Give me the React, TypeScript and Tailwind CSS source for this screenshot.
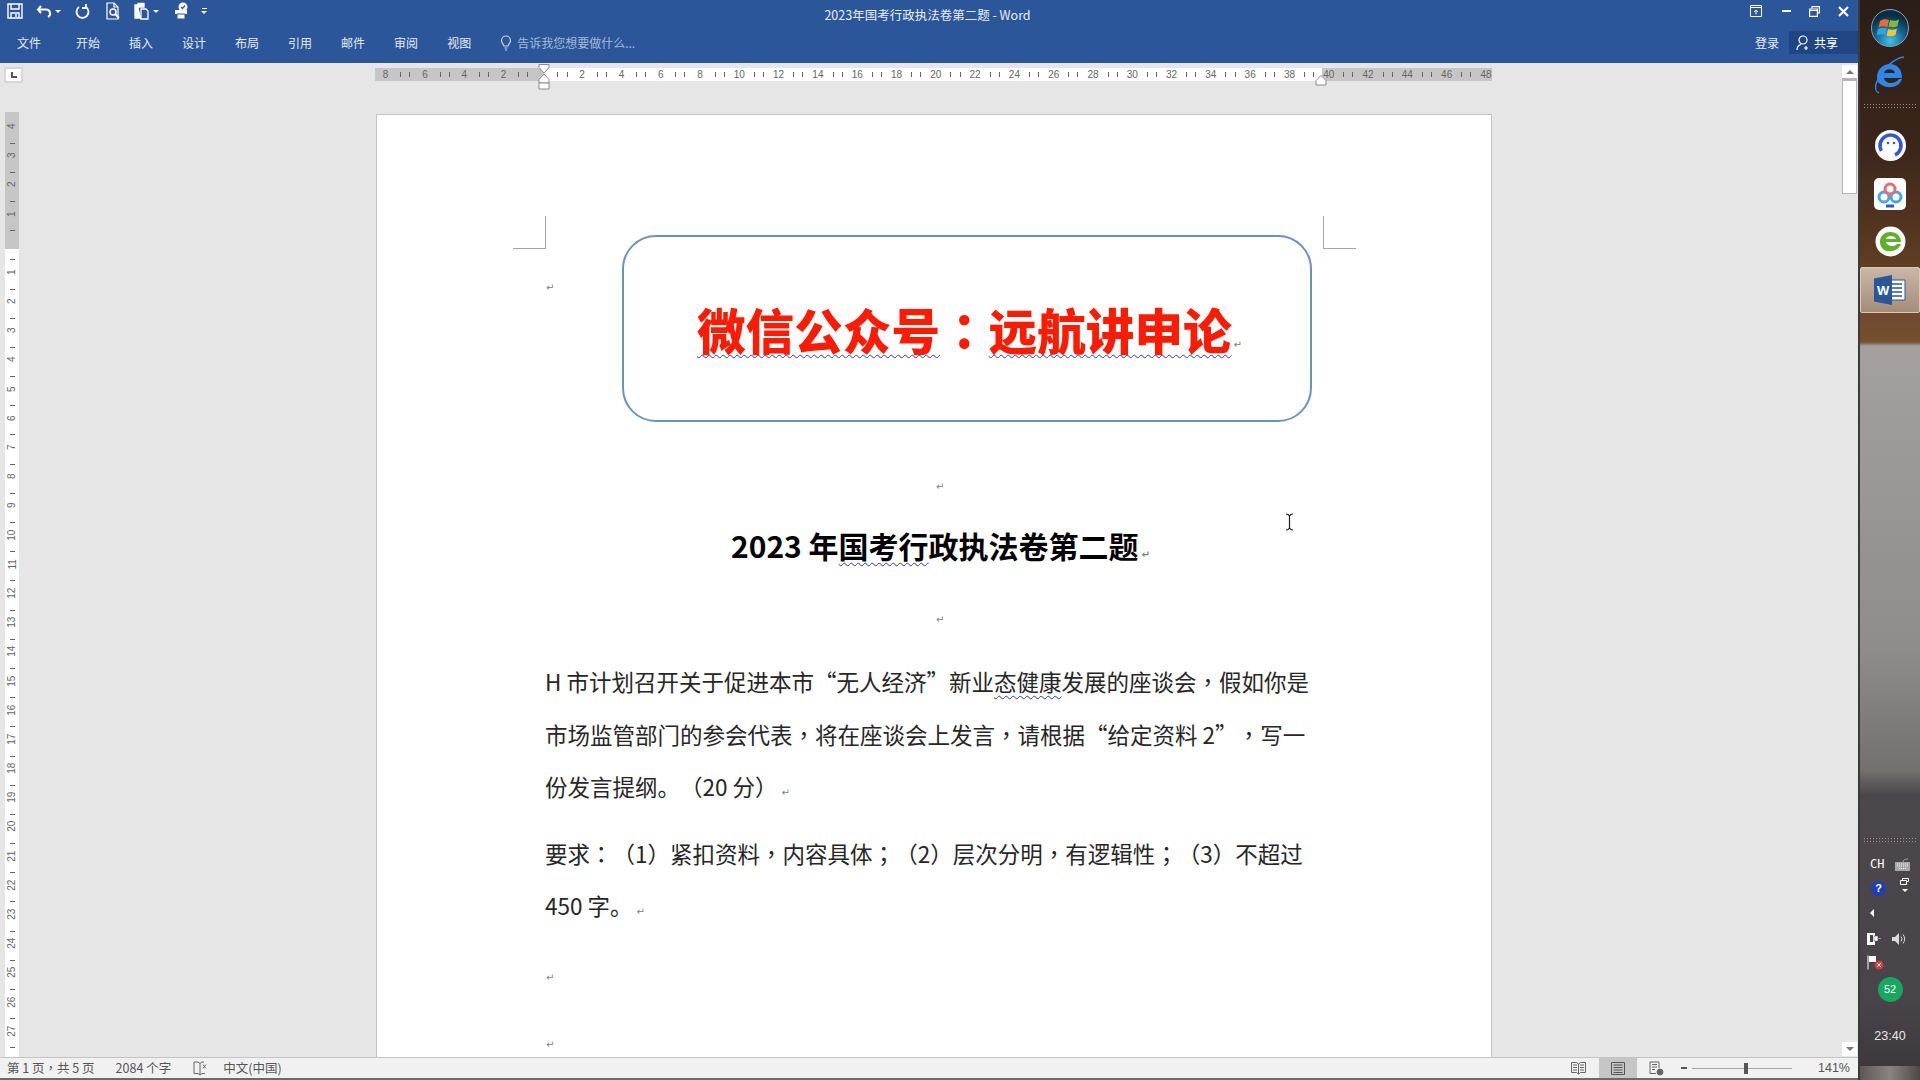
import { ReactNode } from 'react';

const CJK = "font-['Noto_Sans_CJK_SC','Noto_Sans',sans-serif]";

const tabs = ['文件', '开始', '插入', '设计', '布局', '引用', '邮件', '审阅', '视图'];
const hLabels = ['8', '6', '4', '2', '', '2', '4', '6', '8', '10', '12', '14', '16', '18', '20', '22', '24', '26', '28', '30', '32', '34', '36', '38', '40', '42', '44', '46', '48'];
const vLabels = ['4', '3', '2', '1', '', ...Array.from({ length: 27 }, (_, i) => String(i + 1))];

// full-width punctuation, kept as escapes so it can't get normalised to ascii
const LP = '\uFF08';
const RP = '\uFF09';

function Caret() {
	return <span className="ml-[3px] h-0 w-0 border-x-[3px] border-t-[3px] border-x-transparent border-t-white" />;
}

function QuickAccess() {
	return (
		<div className="flex h-[22px] items-center pl-[7px] text-white">
			<svg width="16" height="16" viewBox="0 0 16 16" fill="none" stroke="white" strokeWidth="1.4">
				<path d="M1 1h14v14H1z" />
				<path d="M4 1v5h8V1" />
				<path d="M4 15v-5h8v5" />
				<path d="M9 11v3" />
			</svg>
			<svg className="ml-[13px]" width="16" height="16" viewBox="0 0 16 16" fill="none" stroke="white" strokeWidth="2">
				<path d="M5 3 2 6.5 5 10" />
				<path d="M2.5 6.5H10a4 4 0 0 1 2 7.5" />
			</svg>
			<Caret />
			<svg className="ml-[14px]" width="15" height="16" viewBox="0 0 15 16" fill="none" stroke="white" strokeWidth="1.8">
				<path d="M4 4a6 6 0 1 0 7 0" />
				<path d="M11 1v4h-1M11 5H7" />
			</svg>
			<svg className="ml-[15px]" width="16" height="18" viewBox="0 0 16 18" fill="none" stroke="white" strokeWidth="1.2">
				<path d="M2 1h7l4 4v12H2z" />
				<path d="M9 1v4h4" />
				<circle cx="8" cy="10" r="3" strokeWidth="1.5" />
				<path d="m10 12 4 4" strokeWidth="2" />
			</svg>
			<svg className="ml-[13px]" width="16" height="18" viewBox="0 0 16 18" fill="none" stroke="white" strokeWidth="1.3">
				<path d="M4 3H1v13h6" fill="white" />
				<path d="M4 1.5h6V5H4z" fill="white" />
				<path d="M7 7h5l2 2v8H7z" fill="#2b579a" />
			</svg>
			<Caret />
			<svg className="ml-[13px]" width="18" height="18" viewBox="0 0 18 18" fill="none">
				<path d="M3 8h12v4H3z" fill="white" />
				<path d="M5 12h8v5H5z" fill="white" stroke="#2b579a" />
				<circle cx="11" cy="5" r="4.5" fill="white" />
				<path d="m9 5 1.5 1.5L13 3.5" stroke="#2b579a" strokeWidth="1.2" />
			</svg>
			<span className="ml-[11px] flex flex-col items-center gap-[2px]">
				<span className="h-px w-[5px] bg-white" />
				<span className="h-0 w-0 border-x-[3px] border-t-[3px] border-x-transparent border-t-white" />
			</span>
		</div>
	);
}

function WindowControls() {
	return (
		<div className="flex h-[22px] items-center gap-[18px] pr-[9px]">
			<svg className="mr-[2px]" width="12" height="12" viewBox="0 0 12 12" fill="none" stroke="white">
				<path d="M.5.5h11v11H.5zM.5 2.5h11" />
				<path d="M6 9.5V5M4 7l2-2 2 2" />
			</svg>
			<span className="h-[2px] w-[9px] bg-white" />
			<svg width="11" height="11" viewBox="0 0 11 11" fill="none" stroke="white" strokeWidth="1.2">
				<path d="M3 2.5V.6h7.4V7H8.5" />
				<path d="M.6 3h7.8v7.4H.6zM.6 4.5h7.8" />
			</svg>
			<svg width="11" height="11" viewBox="0 0 11 11" stroke="white" strokeWidth="2.2">
				<path d="m1 1 9 9M10 1l-9 9" />
			</svg>
		</div>
	);
}

function TitleBar() {
	return (
		<div className={`relative h-[63px] shrink-0 bg-[#2b579a] text-white ${CJK}`}>
			<div className="flex items-center justify-between">
				<QuickAccess />
				<div className="pointer-events-none absolute inset-x-0 top-[6px] pr-[3px] text-center text-[12.5px] leading-[18px] text-[#e8edf5]">
					2023年国考行政执法卷第二题 - Word
				</div>
				<WindowControls />
			</div>
			<div className="mt-[9px] flex items-center justify-between">
				<div className="flex items-center pl-[17px] text-[12px] leading-[23px] text-[#e6ebf3]">
					<span className="mr-[35px]">{tabs[0]}</span>
					<div className="flex gap-[29px]">
						{tabs.slice(1).map((t) => (
							<span key={t}>{t}</span>
						))}
					</div>
					<svg className="ml-[29px]" width="12" height="16" viewBox="0 0 12 16" fill="none" stroke="#c6d2e6" strokeWidth="1.2">
						<path d="M4 11C3.500 9 1.500 8 1.500 5.500a4.500 4.500 0 0 1 9 0C10.500 8 8.500 9 8 11z" />
						<path d="M4.500 13h3M5 15h2" />
					</svg>
					<span className="ml-[5px] text-[#a6b9d6]">告诉我您想要做什么...</span>
				</div>
				<div className="flex items-center">
					<span className="mr-[10px] text-[12px] text-[#e6ebf3]">登录</span>
					<div className="flex h-[23px] w-[69px] items-center bg-[#1f4682] pl-[7px] text-[12px]">
						<svg width="15" height="16" viewBox="0 0 15 16" fill="none" stroke="white" strokeWidth="1.2">
							<circle cx="7" cy="5" r="4" />
							<path d="M1 15c0-3 2-5 4-5.500M10 11v4M8 13h4" />
						</svg>
						<span className="ml-[3px]">共享</span>
					</div>
				</div>
			</div>
		</div>
	);
}

function HorizontalRuler() {
	return (
		<div className="flex h-[33px] shrink-0">
			<div className="ml-[4px] mt-[4px] flex h-[16px] w-[19px] items-center justify-center border-2 border-[#d8d8d8] bg-white">
				<span className="ml-[1px] h-[6px] w-[6px] border-b-2 border-l-2 border-[#555]" />
			</div>
			<div className="relative ml-[352px] mt-[5px] h-[13px] w-[1117px]">
				<div className="flex h-full overflow-hidden bg-[linear-gradient(to_right,#c6c6c6_169px,#fff_169px,#fff_947px,#c6c6c6_947px)] pl-0 text-[10px] leading-[13px] text-[#666] font-['Liberation_Sans',sans-serif]">
					<div className="ml-[-9px] flex">
						{hLabels.map((label, i) => (
							<div key={i} className="flex w-[39.3px] shrink-0 items-center justify-around">
								<span className="h-[5px] w-px bg-[#666]" />
								<span className="w-[13px] text-center">{label}</span>
								<span className="h-[5px] w-px bg-[#666]" />
							</div>
						))}
					</div>
				</div>
				<svg className="absolute left-[161px] top-[-4px]" width="16" height="26" viewBox="0 0 16 26" fill="white" stroke="#8a8a8a">
					<path d="M3 .5h10v3L8 9 3 3.500z" />
					<path d="M8 10l5 5.500V19H3v-3.500z" />
					<path d="M3 19h10v6H3z" />
				</svg>
				<svg className="absolute left-[939px] top-[7px]" width="14" height="11" viewBox="0 0 14 11" fill="white" stroke="#8a8a8a">
					<path d="M7 .5l5 5v4.500H2V5.500z" />
				</svg>
			</div>
		</div>
	);
}

function VerticalRuler() {
	return (
		<div className="ml-[5px] mt-[16px] w-[14px] shrink-0 overflow-hidden bg-[linear-gradient(to_bottom,#c6c6c6_137px,#fff_137px)] pt-[4.400px] text-[10px] text-[#666] font-['Liberation_Sans',sans-serif]">
			{vLabels.map((label, i) => (
				<div key={i} className="flex h-[29.200px] flex-col items-center justify-end">
					<span className="flex h-[14.600px] -rotate-90 items-end leading-[14px]">{label}</span>
					<span className="mt-[7px] h-[5px] w-px rotate-90 bg-[#666]" />
				</div>
			))}
		</div>
	);
}

function Mark({ className = '' }: { className?: string }) {
	return <span className={`text-[10px] leading-none text-[#808080] font-['DejaVu_Sans',sans-serif] ${className}`}>↵</span>;
}

function Wavy({ children }: { children: ReactNode }) {
	return <span className="underline decoration-[#2b3fae] decoration-wavy decoration-1 underline-offset-[4px]">{children}</span>;
}

// the screenshot has centred commas and colons, the TC font draws them that way
function Punct({ children }: { children: ReactNode }) {
	return <span className="font-['Noto_Sans_CJK_TC',sans-serif]">{children}</span>;
}

const Comma = () => <Punct>{'\uFF0C'}</Punct>;
const Colon = () => <Punct>{'\uFF1A'}</Punct>;
const Semi = () => <Punct>{'\uFF1B'}</Punct>;

function OpenQuote() {
	return <span className="inline-block w-[1em] text-right">{'\u201C'}</span>;
}

function CloseQuote() {
	return <span className="inline-block w-[1em] text-left">{'\u201D'}</span>;
}

function CropMark({ className }: { className: string }) {
	return <div className={`absolute top-[101px] h-[33px] w-[33px] border-b border-[#a6a6a6] ${className}`} />;
}

function Page() {
	return (
		<div className={`relative mt-[18px] ml-[357px] w-[1116px] shrink-0 self-start border border-[#c6c6c6] bg-white pl-[168px] pr-[179px] pt-[120px] text-[#262626] [text-spacing-trim:space-all] ${CJK}`}>
			<CropMark className="left-[136px] border-r" />
			<CropMark className="left-[946px] border-l" />
			<div className="flex items-start justify-between">
				<Mark className="mt-[48px] ml-[1px]" />
				<div className="flex h-[187px] w-[690px] items-center justify-center rounded-[34px] border-2 border-[#6a94bf] pl-[5px]">
					<span className="text-[48.600px] leading-[60px] font-black text-[#ff1a00]">
						<Wavy>微信公众号</Wavy>
						<Colon />
						<Wavy>远航讲申论</Wavy>
					</span>
					<Mark className="mt-[32px] ml-[2px]" />
				</div>
			</div>
			<div className="mt-[53px] pl-[391px] leading-none">
				<Mark />
			</div>
			<h1 className="mt-[31px] pl-[24px] pr-[-1px] text-center text-[30px] leading-[44px] font-bold text-black">
				2023 年<Wavy>国考行</Wavy>政执法卷第二题
				<Mark className="ml-[3px]" />
			</h1>
			<div className="mt-[41px] pl-[391px] leading-none">
				<Mark />
			</div>
			<p className="mt-[30px] whitespace-nowrap text-[22.500px] leading-[52.600px]">
				H 市计划召开关于促进本市<OpenQuote />无人经济<CloseQuote />新业<Wavy>态健康</Wavy>发展的座谈会<Comma />假如你是
				<br />
				市场监管部门的参会代表<Comma />将在座谈会上发言<Comma />请根据<OpenQuote />给定资料 2<CloseQuote /><Comma />写一
				<br />
				份发言提纲。{LP}20 分{RP}
				<Mark className="ml-[4px]" />
			</p>
			<p className="mt-[14px] whitespace-nowrap text-[22.500px] leading-[52.600px]">
				要求<Colon />{LP}1{RP}紧扣资料<Comma />内容具体<Semi />{LP}2{RP}层次分明<Comma />有逻辑性<Semi />{LP}3{RP}不超过
				<br />
				450 字。
				<Mark className="ml-[4px]" />
			</p>
			<div className="mt-[34px] leading-none">
				<Mark className="ml-[1px]" />
			</div>
			<div className="mt-[50px] h-[40px] leading-none">
				<Mark className="ml-[1px]" />
			</div>
			<svg className="absolute left-[908px] top-[398px]" width="9" height="18" viewBox="0 0 9 18" fill="none" stroke="#222" strokeWidth="1.2">
				<path d="M1 1c2 0 3 1 3.500 2 .5-1 1.500-2 3.500-2M4.500 3v12M1 17c2 0 3-1 3.500-2 .5 1 1.500 2 3.500 2" />
			</svg>
		</div>
	);
}

function Scrollbar() {
	return (
		<div className="ml-auto mr-px mt-[-31px] flex w-[15px] shrink-0 flex-col self-stretch">
			<div className="flex h-[15px] items-center justify-center border-b-2 border-[#b5b5b5] bg-white">
				<span className="h-0 w-0 border-x-[4px] border-b-[4px] border-x-transparent border-b-[#777]" />
			</div>
			<div className="h-[114px] border border-[#b5b5b5] bg-white" />
			<div className="flex-1" />
			<div className="mb-[1px] flex h-[14px] items-center justify-center bg-white">
				<span className="h-0 w-0 border-x-[4px] border-t-[4px] border-x-transparent border-t-[#777]" />
			</div>
		</div>
	);
}

function StatusBar() {
	return (
		<div className={`flex h-[23px] shrink-0 items-center justify-between border-t border-[#c4c4c4] border-b-2 border-b-[#6b6b6b] bg-[#f1f1f1] text-[12.500px] text-[#555] [text-spacing-trim:space-all] ${CJK}`}>
			<div className="flex items-center pl-[7px]">
				<span>第 1 页<Comma />共 5 页</span>
				<span className="ml-[21px]">2084 个字</span>
				<svg className="ml-[22px]" width="15" height="15" viewBox="0 0 15 15" fill="none" stroke="#666">
					<path d="M1 1h4l2 1.500V14L5 12.500H1zM7 2.500 9 1h2M7 14l2-1.500h3" />
					<path d="m10 3.500 3 4M13 3.500l-3 4" />
				</svg>
				<span className="ml-[15px]">中文(中国)</span>
			</div>
			<div className="flex h-full items-center">
				<svg width="15" height="14" viewBox="0 0 15 14" fill="none" stroke="#666">
					<path d="M.5 1.500h5L7.500 3l2-1.500h5v10h-5l-2 1.500-2-1.500h-5zM7.500 3v10M2 4h4M2 6.500h4M2 9h4M9 4h4M9 6.500h4M9 9h4" />
				</svg>
				<div className="ml-[13px] flex h-full w-[38px] items-center justify-center bg-[#c6c6c6]">
					<svg width="14" height="13" viewBox="0 0 14 13" fill="none" stroke="#555">
						<path d="M.5.500h13v12H.5zM2.500 3h9M2.500 5.500h9M2.500 8h9M2.500 10.500h9" />
					</svg>
				</div>
				<svg className="ml-[12px]" width="15" height="15" viewBox="0 0 15 15" fill="none" stroke="#666">
					<path d="M7 12.500H1V1h9v6M3 3.500h5M3 6h5M3 8.500h3" />
					<circle cx="11" cy="11" r="3" fill="#666" />
				</svg>
				<span className="ml-[17px] h-[2px] w-[6px] bg-[#555]" />
				<div className="relative ml-[5px] h-px w-[100px] bg-[#a8a8a8]">
					<span className="absolute left-[52px] top-[-5px] h-[11px] w-[4px] bg-[#555]" />
				</div>
				<span className="relative ml-[4px] h-[8px] w-[8px] bg-[linear-gradient(#555,#555)_center/100%_2px_no-repeat,linear-gradient(#555,#555)_center/2px_100%_no-repeat]" />
				<span className="ml-[14px] w-[40px] text-[12.500px] font-['Liberation_Sans',sans-serif]">141%</span>
			</div>
		</div>
	);
}

function DotBand({ className }: { className: string }) {
	return <div className={`h-[6px] w-[55px] bg-[radial-gradient(#9a9088_35%,transparent_40%)] bg-size-[3px_3px] ${className}`} />;
}

function Sidebar() {
	return (
		<div className="flex w-[62px] shrink-0 flex-col items-center border-l-2 border-[#3a3a3a] bg-[linear-gradient(to_bottom,#2a1d17_0,#3c261a_150px,#5a3a22_250px,#765030_342px,#a4a0a0_346px,#908c8b_650px,#74706f_770px,#4c474a_795px,#48444a_1000px,#3a3638_1080px)]">
			<svg className="mt-[9px]" width="38" height="38" viewBox="0 0 38 38">
				<defs>
					<radialGradient id="orb" cx="50%" cy="85%" r="70%">
						<stop offset="0" stopColor="#3fc1ee" />
						<stop offset="0.6" stopColor="#13608c" />
						<stop offset="1" stopColor="#0a2c44" />
					</radialGradient>
				</defs>
				<circle cx="19" cy="19" r="18.500" fill="url(#orb)" stroke="#8ea4ad" />
				<path d="M9 12c3-2 6-2 9-1l-1.500 7c-3-1-6-1-9 .5z" fill="#ee6a2a" />
				<path d="M19 11c3 1 6 1 9-.5L26.500 17c-3 1.500-6 1.500-9 .5z" fill="#7dbb3c" />
				<path d="M7 20c3-1.500 6-1.500 9-.5L14.500 26c-3-1-6-1-9 .5z" fill="#2ea6e0" />
				<path d="M17 20c3 1 6 1 9-.5L24.500 26c-3 1.500-6 1.500-9 .5z" fill="#f3c52e" />
			</svg>
			<svg className="mt-[9px]" width="34" height="38" viewBox="0 0 34 38" fill="none">
				<path d="M4 22c0-9 6-14 13-14s12 5 12 14H11c1 6 11 7 15 1h3c-3 9-14 10-20 6-4-2-5-4-5-7zM11 17h11c-1-5-10-5-11 0z" fill="#2f86e8" fillRule="evenodd" />
				<path d="M31 1C22 2 9 12 3 28c-1 4 0 8 3 9" stroke="#2f86e8" strokeWidth="1.500" />
			</svg>
			<DotBand className="mt-[9px]" />
			<svg className="mt-[21px]" width="31" height="31" viewBox="0 0 31 31" fill="none">
				<circle cx="15.500" cy="15.500" r="15.500" fill="white" />
				<circle cx="15.500" cy="15.500" r="10.500" stroke="#3057d8" strokeWidth="3.500" strokeDasharray="50 16" transform="rotate(150 15.500 15.500)" />
				<circle cx="13" cy="13" r="1.300" fill="#3057d8" />
				<circle cx="19" cy="13" r="1.300" fill="#3057d8" />
			</svg>
			<div className="mt-[17px] flex h-[32px] w-[32px] items-center justify-center rounded-[5px] bg-white">
				<svg width="28" height="28" viewBox="0 0 28 28" fill="none" strokeWidth="3">
					<circle cx="8" cy="17" r="5" stroke="#3fa9e8" />
					<circle cx="20" cy="17" r="5" stroke="#3fa9e8" />
					<circle cx="14" cy="9" r="5" stroke="#ec6a6f" />
					<path d="M10 26h8" stroke="#3057d8" />
				</svg>
			</div>
			<svg className="mt-[16px]" width="31" height="31" viewBox="0 0 31 31" fill="none">
				<circle cx="15.500" cy="15.500" r="15" fill="white" />
				<path d="M5 16c0-7 5-10 10.500-10S26 10 26 16H11c1 5 9 5 11 2h4c-3 8-14 9-18 5-2-2-3-4-3-7zM11 13h10c-1-4-9-4-10 0z" fill="#5fb02a" fillRule="evenodd" />
			</svg>
			<div className="mt-[10px] flex h-[46px] w-[60px] items-center justify-center rounded-[2px] border border-[#d8c8b4] bg-[linear-gradient(to_bottom,#c9b8a6,#a58c78)]">
				<svg width="32" height="30" viewBox="0 0 32 30">
					<path d="M11 5h20v20H11z" fill="white" stroke="#2b579a" />
					<path d="M18 9h10M18 13h10M18 17h10M18 21h10" stroke="#2b579a" strokeWidth="1.500" />
					<path d="M0 3.500 18 0v30L0 26.500z" fill="#2b579a" />
					<text x="3" y="20" fontSize="13" fontWeight="700" fill="white" fontFamily="Liberation Sans">W</text>
				</svg>
			</div>
			<DotBand className="mt-auto" />
			<div className="mt-[13px] flex w-[40px] items-center justify-between text-[12px] leading-[16px] text-white font-['DejaVu_Sans_Mono',monospace]">
				<span>CH</span>
				<svg width="15" height="13" viewBox="0 0 15 13" fill="#a8a8a8">
					<path d="M0 4h15v9H0z" />
					<path d="M2 6h11M2 8h11M4 10.500h7" stroke="#eee" strokeDasharray="1 1" />
					<path d="M8 4c0-2 2-3 5-3" stroke="#a8a8a8" fill="none" />
				</svg>
			</div>
			<div className="mt-[6px] flex w-[40px] items-start justify-between pl-[1px]">
				<span className="mt-[3px] flex h-[15px] w-[15px] items-center justify-center rounded-full bg-[#1f3fb8] text-[11px] leading-none font-bold text-white font-['Liberation_Sans',sans-serif]">?</span>
				<span className="flex flex-col items-center pr-[1px]">
					<svg width="9" height="7" viewBox="0 0 9 7" fill="none" stroke="white">
						<path d="M2.500 2V.5h6v3h-2M.5 2.500h6v4h-6z" />
					</svg>
					<span className="mt-[4px] h-0 w-0 border-x-[3px] border-t-[3px] border-x-transparent border-t-white" />
				</span>
			</div>
			<span className="mt-[13px] mr-[36px] h-0 w-0 border-y-[4px] border-r-[4px] border-y-transparent border-r-white" />
			<div className="mt-[15px] flex w-[46px] items-center justify-between pr-[7px]">
				<svg width="14" height="14" viewBox="0 0 14 14" fill="white">
					<path d="M0 1h8v12H0z" />
					<path d="M3 3h3v7H3z" fill="#444" />
					<path d="M7 4h4v5H7zM11 6h3v1h-3z" stroke="#444" strokeWidth=".5" />
				</svg>
				<svg width="14" height="12" viewBox="0 0 14 12" fill="none">
					<path d="M0 4h3l4-4v12L3 8H0z" fill="#dcdcdc" />
					<path d="M9 3.500a4 4 0 0 1 0 5M11 1.500a7 7 0 0 1 0 9" stroke="#dcdcdc" />
				</svg>
			</div>
			<div className="mt-[9px] w-[46px]">
				<svg width="17" height="15" viewBox="0 0 17 15" fill="none">
					<path d="M1 .5v14" stroke="white" />
					<path d="M2 1h7v6H2z" fill="white" />
					<circle cx="12" cy="10" r="4.500" fill="#d83b3b" />
					<path d="m10 8 4 4M14 8l-4 4" stroke="white" />
				</svg>
			</div>
			<div className="mt-[8px] flex h-[23px] w-[23px] items-center justify-center rounded-full bg-[#17a860] text-[11px] text-white ring-1 ring-[#17a860] font-['Liberation_Sans',sans-serif]">
				52
			</div>
			<span className="mt-[27px] text-[12.500px] leading-[16px] text-[#e8e8e8] font-['Liberation_Sans',sans-serif]">23:40</span>
			<div className="mt-[22px] h-[14px] w-full bg-[linear-gradient(to_right,#5c5856,#8a8480,#4c4846)]" />
		</div>
	);
}

export default function App() {
	return (
		<div className="flex h-[1080px] w-[1920px] overflow-hidden">
			<div className="flex min-w-0 flex-1 flex-col">
				<TitleBar />
				<div className="relative flex min-h-0 flex-1 flex-col overflow-hidden bg-[#e6e6e6]">
					<HorizontalRuler />
					<div className="flex min-h-0 flex-1">
						<VerticalRuler />
						<Page />
						<Scrollbar />
					</div>
				</div>
				<StatusBar />
			</div>
			<Sidebar />
		</div>
	);
}
